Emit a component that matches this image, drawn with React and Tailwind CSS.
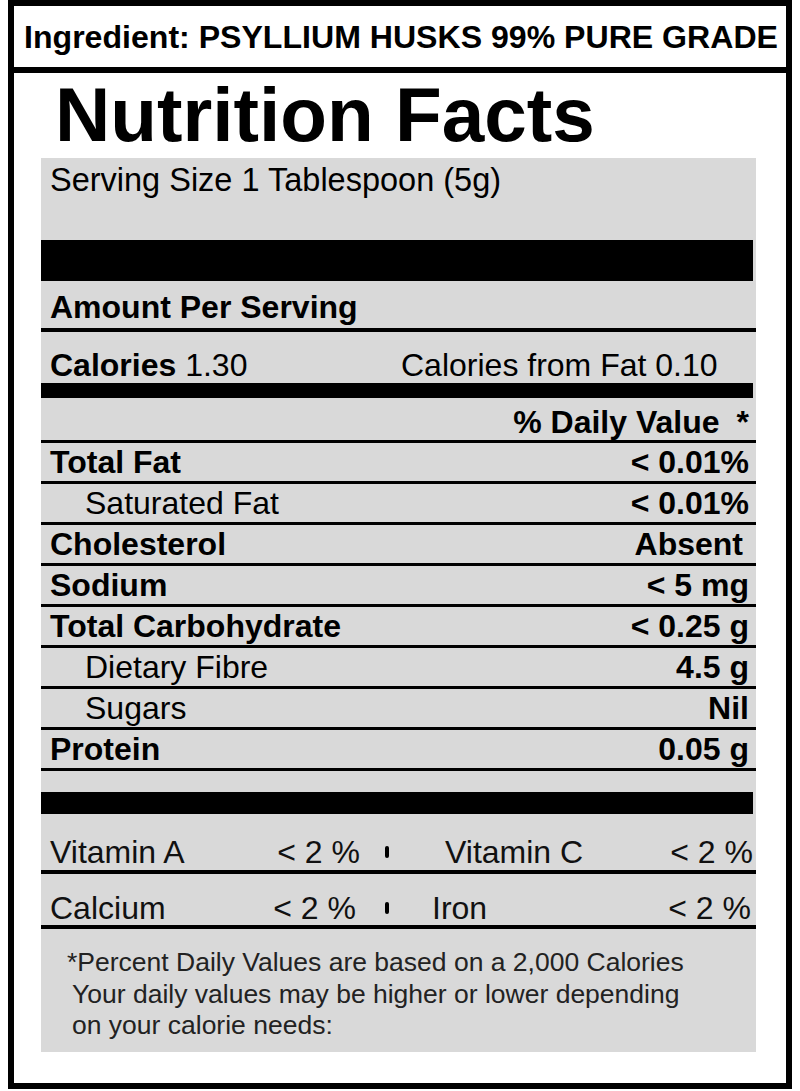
import React from 'react';

const nutrients = [
  { label: 'Total Fat', value: '< 0.01%', bold: true },
  { label: 'Saturated Fat', value: '< 0.01%', indent: true },
  { label: 'Cholesterol', value: 'Absent', bold: true, pad: 'pr-[13px]' },
  { label: 'Sodium', value: '< 5 mg', bold: true },
  { label: 'Total Carbohydrate', value: '< 0.25 g', bold: true },
  { label: 'Dietary Fibre', value: '4.5 g', indent: true },
  { label: 'Sugars', value: 'Nil', indent: true },
  { label: 'Protein', value: '0.05 g', bold: true },
];

function Bar({ h }) {
  return <div className={`${h} w-[712px] bg-black`} />;
}

function NutrientRow({ label, value, bold, indent, pad }) {
  return (
    <div className="h-[41px] border-b-[3px] border-black flex items-center justify-between">
      <span className={`${indent ? 'pl-[44px] font-normal' : 'pl-[9px] font-bold'} leading-8`}>
        {label}
      </span>
      <span className={`${pad || 'pr-[7px]'} font-bold leading-8`}>{value}</span>
    </div>
  );
}

function Tick() {
  return <span className="block w-[4px] h-[12px] rounded-full bg-black" />;
}

export default function App() {
  return (
    <div className="w-[800px] h-[1091px] bg-white text-black font-['Liberation_Sans',Arial,Helvetica,sans-serif]">
      <div className="ml-[8px] w-[784px] h-[1089px] border-[6px] border-black flex flex-col">
        {/* ingredient header */}
        <div className="h-[67px] border-b-[6px] border-black flex items-center justify-center pl-[2px]">
          <span className="text-[32.1px] font-bold leading-8 whitespace-nowrap">
            Ingredient: PSYLLIUM HUSKS 99% PURE GRADE
          </span>
        </div>

        <div className="h-[85px] pl-[41px] pt-[4px]">
          <h1 className="text-[76.5px] font-bold leading-none whitespace-nowrap">Nutrition Facts</h1>
        </div>

        {/* label panel */}
        <div className="ml-[27px] w-[715px] h-[894px] bg-[#d9d9d9] text-[32px]">
          <div className="h-[82px] pl-[9px] pt-[6px] leading-8 text-[32.5px]">Serving Size 1 Tablespoon (5g)</div>
          <Bar h="h-[41px]" />
          <div className="h-[51px] border-b-[4px] border-black flex items-center pl-[9px] pt-[5px]">
            <span className="font-bold leading-8">Amount Per Serving</span>
          </div>
          <div className="h-[51px] flex items-center pl-[9px] pt-[15px] leading-8">
            <span className="w-[351px]">
              <b>Calories</b> 1.30
            </span>
            <span>Calories from Fat 0.10</span>
          </div>
          <Bar h="h-[15px]" />
          <div className="h-[45px] border-b-[3px] border-black flex items-center justify-end pr-[7px] pt-[5px] font-bold leading-8">
            <span>% Daily Value</span>
            <span className="ml-[17px]">*</span>
          </div>

          {nutrients.map((n) => (
            <NutrientRow key={n.label} {...n} />
          ))}

          <div className="h-[21px]" />
          <Bar h="h-[22px]" />

          <div className="h-[60px] border-b-[4px] border-black flex items-center pt-[20px] leading-8 text-[#111]">
            <div className="w-[319px] pl-[9px] flex justify-between">
              <span>Vitamin A</span>
              <span>&lt; 2 %</span>
            </div>
            <div className="w-[85px] pl-[25px]">
              <Tick />
            </div>
            <div className="w-[308px] flex justify-between">
              <span>Vitamin C</span>
              <span>&lt; 2 %</span>
            </div>
          </div>
          <div className="h-[55px] border-b-[4px] border-black flex items-center pt-[16px] leading-8 text-[#111]">
            <div className="w-[315px] pl-[9px] flex justify-between">
              <span>Calcium</span>
              <span>&lt; 2 %</span>
            </div>
            <div className="w-[76px] pl-[29px]">
              <Tick />
            </div>
            <div className="w-[319px] flex justify-between">
              <span>Iron</span>
              <span>&lt; 2 %</span>
            </div>
          </div>

          <div className="pt-[18px] text-[26.5px] leading-[31.5px] text-[#222]">
            <div className="pl-[26px]">*Percent Daily Values are based on a 2,000 Calories</div>
            <div className="pl-[31px]">Your daily values may be higher or lower depending</div>
            <div className="pl-[31px]">on your calorie needs:</div>
          </div>
        </div>
      </div>
    </div>
  );
}
